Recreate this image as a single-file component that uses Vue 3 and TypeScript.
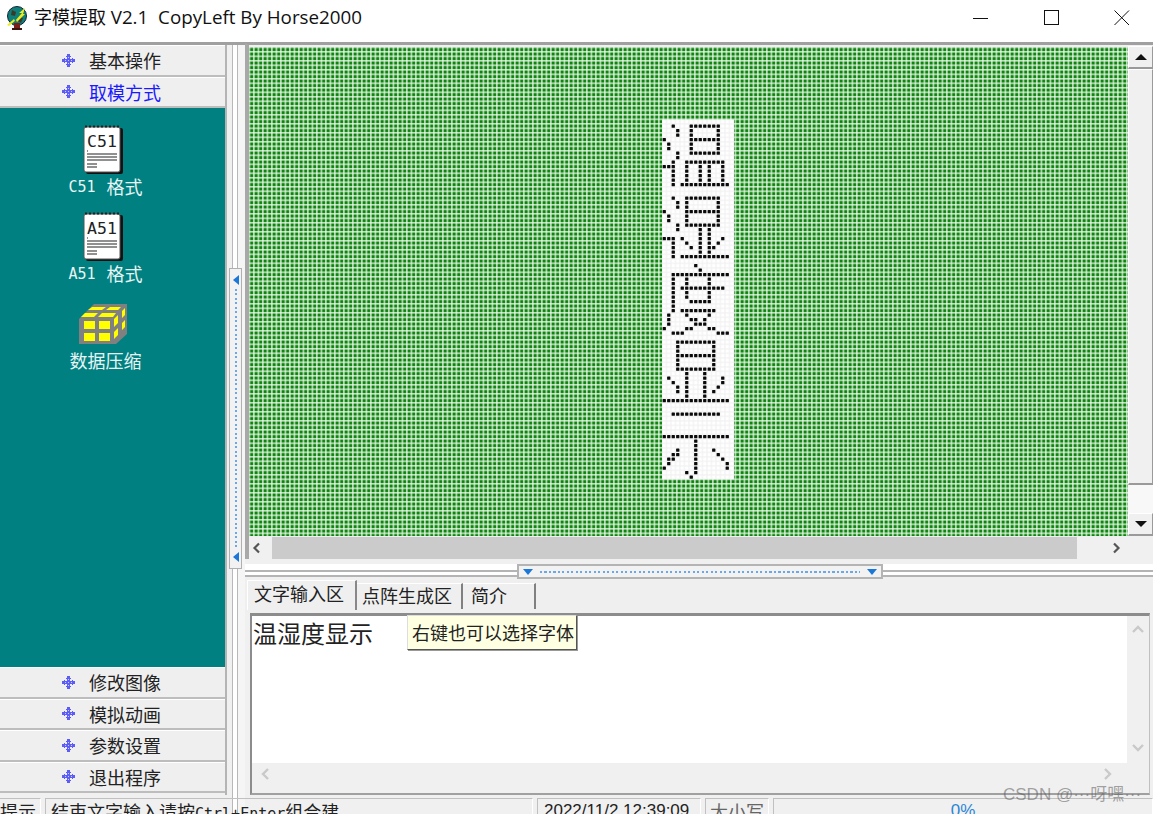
<script setup lang="ts">
import { computed } from 'vue'

const topMenus = ['基本操作', '取模方式']
const bottomMenus = ['修改图像', '模拟动画', '参数设置', '退出程序']

// column lists per row: [start,end] ranges or single columns
type Spec = Record<number, Array<number | [number, number]>>
const spec: Spec = {
  1: [2, [6, 12]], 2: [3, 6, 12], 3: [3, 6, 12], 4: [0, [6, 12]], 5: [1, 6, 12], 6: [1, 6, 12],
  7: [3, [6, 12]], 8: [3], 9: [2, [5, 13]], 10: [[0, 2], 5, 8, 10, 13], 11: [2, 5, 8, 10, 13],
  12: [2, 5, 8, 10, 13], 13: [2, 5, 8, 10, 13], 14: [2, [4, 14]],
  17: [2, [5, 12]], 18: [3, 5, 12], 19: [3, 5, 12], 20: [0, [5, 12]], 21: [1, 5, 12], 22: [1, 5, 12],
  23: [3, [5, 12]], 24: [3, 8, 10], 25: [8, 10], 26: [[0, 2], 4, 8, 10, 13], 27: [2, 5, 8, 10, 12],
  28: [2, 6, 8, 10, 11], 29: [2, 8, 10], 30: [2, [4, 14]],
  32: [7], 33: [8], 34: [[2, 14]], 35: [2, 5, 10], 36: [2, 5, 10], 37: [2, [4, 13]], 38: [2, 5, 10],
  39: [2, 5, 10], 40: [2, [6, 10]], 41: [2], 42: [2, [4, 11]], 43: [1, 5, 10], 44: [1, 6, 7, 9],
  45: [1, [7, 9]], 46: [0, 5, 6, 10, 11], 47: [2, 3, 4, [12, 14]],
  49: [[3, 11]], 50: [3, 11], 51: [3, 11], 52: [[3, 11]], 53: [3, 11], 54: [3, 11], 55: [[3, 11]],
  56: [5, 9], 57: [1, 5, 9, 13], 58: [2, 5, 9, 13], 59: [3, 5, 9, 12], 60: [3, 5, 9, 11], 61: [5, 9],
  62: [[0, 14]],
  65: [[2, 12]], 70: [[0, 14]], 71: [7], 72: [7], 73: [3, 7, 11], 74: [2, 3, 7, 12], 75: [1, 2, 7, 13],
  76: [1, 7, 14], 77: [0, 7, 14], 78: [5, 7], 79: [6]
}

const PITCH = 4.5
const dots = computed(() => {
  const out: { x: number; y: number; k: string }[] = []
  for (const [row, cols] of Object.entries(spec)) {
    for (const c of cols) {
      const [a, b] = Array.isArray(c) ? c : [c, c]
      for (let i = a; i <= b; i++) {
        out.push({ x: 413 + i * PITCH + 0.6, y: 72.4 + Number(row) * PITCH + 0.6, k: `${row}-${i}` })
      }
    }
  }
  return out
})

const tools = [
  { lat: 'C51', cjk: '格式', note: true },
  { lat: 'A51', cjk: '格式', note: true },
  { lat: '', cjk: '数据压缩', note: false }
]
const tabs = ['文字输入区', '点阵生成区', '简介']
</script>

<template>
  <div class="win">
    <header class="title">
      <svg class="appicon" width="26" height="26" viewBox="0 0 26 26">
        <ellipse cx="12" cy="11" rx="9.5" ry="9.5" fill="#0f7f7a" stroke="#123" stroke-width="1" />
        <path d="M7 5l4 2-1 4-4-1zM14 12l4 1-2 5-3-2z" fill="#3a3a2a" />
        <rect x="9" y="18" width="6" height="6" fill="#7a2018" />
        <rect x="7" y="23" width="10" height="2" fill="#3c1410" />
        <path d="M2 20l7-6 1 2 7-8-3 0 6-5-2 6 2 0-8 8-1-2-7 6z" fill="#ecec20" />
      </svg>
      <span class="title-text">字模提取 <span class="title-lat">V2.1&nbsp;&nbsp;CopyLeft By Horse2000</span></span>
      <div class="controls">
        <svg width="16" height="16" viewBox="0 0 16 16" class="c-min"><path d="M0 8.5h15" stroke="#111" fill="none" /></svg>
        <svg width="16" height="16" viewBox="0 0 16 16" class="c-max"><rect x="0.5" y="0.5" width="14" height="14" stroke="#111" fill="none" /></svg>
        <svg width="16" height="16" viewBox="0 0 16 16" class="c-close"><path d="M0.5 0.5l14.5 14.5M15 0.5L0.5 15" stroke="#111" fill="none" /></svg>
      </div>
    </header>

    <main class="body">
      <aside class="side">
        <button v-for="(m, i) in topMenus" :key="m" class="menu" :class="{ on: i === 1 }">
          <svg class="diamond" width="13" height="13" viewBox="0 0 13 13">
            <path d="M5 0h3v2h1v1H8v2h2V4h1v1h2v3h-2v1h-1V8H8v2h1v1H8v2H5v-2H4v-1h1V8H3v1H2V8H0V5h2V4h1v1h2V3H4V2h1z" fill="#5c5cf6" />
            <path d="M6 3h1v1H6zM6 9h1v1H6zM3 6h1v1H3zM9 6h1v1H9zM6 6h1v1H6z" fill="#c9c9ff" />
          </svg>
          <span class="menu-text">{{ m }}</span>
        </button>
        <div class="tools">
          <div v-for="t in tools" :key="t.lat + t.cjk" class="tool">
            <svg v-if="t.note" width="42" height="50" viewBox="0 0 42 50">
              <rect x="3" y="3" width="37" height="46" rx="2" fill="#111" />
              <rect x="1" y="2" width="36" height="45" rx="2" fill="#fff" stroke="#555" />
              <path d="M2 1.5h34" stroke="#222" stroke-width="2" stroke-dasharray="2 2" />
              <text x="19" y="22" text-anchor="middle" class="note-t">{{ t.lat }}</text>
              <path d="M4 26h1M4 29h30M4 32h30M4 35h30M4 39h10M4 42h10" stroke="#222" stroke-width="1.2" />
            </svg>
            <svg v-else width="50" height="42" viewBox="0 0 50 42">
              <path d="M0 16L15 1h33v30L37 41H0z" fill="#808080" />
              <path d="M13 4h14l-4 3H9zM31 4h11l-3 3H27zM6 10h13l-4 4H2zM23 10h14l-3 4H19z" fill="#ffff00" />
              <rect x="5" y="18" width="11" height="8" fill="#ffff00" />
              <rect x="20" y="18" width="11" height="8" fill="#ffff00" />
              <rect x="5" y="30" width="11" height="8" fill="#ffff00" />
              <rect x="20" y="30" width="11" height="8" fill="#ffff00" />
              <path d="M35 16l4-4v8l-4 4zM43 8l3-3v7l-3 3zM35 29l4-4v7l-4 4zM43 20l3-3v7l-3 3z" fill="#ffff00" />
            </svg>
            <div class="tool-label"><span v-if="t.lat" class="lat">{{ t.lat }}</span><span>{{ t.cjk }}</span></div>
          </div>
        </div>
        <button v-for="m in bottomMenus" :key="m" class="menu">
          <svg class="diamond" width="13" height="13" viewBox="0 0 13 13">
            <path d="M5 0h3v2h1v1H8v2h2V4h1v1h2v3h-2v1h-1V8H8v2h1v1H8v2H5v-2H4v-1h1V8H3v1H2V8H0V5h2V4h1v1h2V3H4V2h1z" fill="#5c5cf6" />
            <path d="M6 3h1v1H6zM6 9h1v1H6zM3 6h1v1H3zM9 6h1v1H9zM6 6h1v1H6z" fill="#c9c9ff" />
          </svg>
          <span class="menu-text">{{ m }}</span>
        </button>
      </aside>

      <div class="vsplit">
        <div class="vhandle">
          <i class="tri-l"></i><span class="vdots"></span><i class="tri-l"></i>
        </div>
      </div>

      <section class="right">
        <div class="canvas-box">
          <div class="canvas-row">
            <svg class="grid" width="879" height="489" viewBox="0 0 879 489">
              <defs>
                <pattern id="g" x="0.5" y="0.4" width="4.5" height="4.5" patternUnits="userSpaceOnUse">
                  <rect width="4.5" height="4.5" fill="#eef7ee" />
                  <rect x="0.5" y="0.5" width="3.3" height="3.3" fill="#1a8f1a" />
                  <rect x="1.1" y="1.1" width="2" height="2" fill="#088208" />
                </pattern>
                <pattern id="w" x="413" y="72.4" width="4.5" height="4.5" patternUnits="userSpaceOnUse">
                  <rect width="4.5" height="4.5" fill="#f2f2f2" />
                  <rect x="0.6" y="0.6" width="3.3" height="3.3" fill="#fff" />
                </pattern>
              </defs>
              <rect width="879" height="489" fill="url(#g)" />
              <rect x="413" y="72.4" width="72" height="360" fill="url(#w)" />
              <rect v-for="d in dots" :key="d.k" :x="d.x" :y="d.y" width="3.3" height="3.3" rx="0.5" fill="#0a0a0a" />
            </svg>
            <div class="vbar">
              <div class="arrow-btn"><i class="tri-up"></i></div>
              <div class="vthumb"></div>
              <div class="vtrack"></div>
              <div class="arrow-btn"><i class="tri-down"></i></div>
            </div>
          </div>
          <div class="hbar">
            <svg class="chev" width="12" height="12" viewBox="0 0 12 12"><path d="M8 1.5L3.5 6 8 10.5" fill="none" stroke="#555" stroke-width="2.2" /></svg>
            <div class="hthumb"></div>
            <svg class="chev r" width="12" height="12" viewBox="0 0 12 12"><path d="M4 1.5L8.5 6 4 10.5" fill="none" stroke="#555" stroke-width="2.2" /></svg>
          </div>
        </div>

        <div class="hsplit">
          <div class="hhandle">
            <i class="tri-d"></i><span class="hdots"></span><i class="tri-d"></i>
          </div>
        </div>

        <div class="tabs">
          <div v-for="(t, i) in tabs" :key="t" class="tab" :class="'t' + i">{{ t }}</div>
        </div>

        <div class="editor">
          <div class="edit-row">
            <div class="edit-area">
              <span class="edit-text">温湿度显示</span>
              <div class="tip">右键也可以选择字体</div>
            </div>
            <div class="ebar">
              <svg width="14" height="10" viewBox="0 0 14 10"><path d="M2 8l5-5 5 5" fill="none" stroke="#c9c9c9" stroke-width="2.4" /></svg>
              <svg width="14" height="10" viewBox="0 0 14 10"><path d="M2 2l5 5 5-5" fill="none" stroke="#c9c9c9" stroke-width="2.4" /></svg>
            </div>
          </div>
          <div class="ehbar">
            <svg width="10" height="14" viewBox="0 0 10 14"><path d="M8 2L3 7l5 5" fill="none" stroke="#c9c9c9" stroke-width="2.4" /></svg>
            <svg width="10" height="14" viewBox="0 0 10 14"><path d="M2 2l5 5-5 5" fill="none" stroke="#c9c9c9" stroke-width="2.4" /></svg>
          </div>
        </div>
      </section>
    </main>

    <footer class="status">
      <div class="cell s0">提示</div>
      <div class="cell s1">结束文字输入请按<span class="mono">Ctrl+Enter</span>组合建</div>
      <div class="cell s2">2022/11/2 12:39:09</div>
      <div class="cell s3">大小写</div>
      <div class="cell s4"><span class="pct">0%</span></div>
    </footer>
    <div class="mark">CSDN @···呀嘿···</div>
  </div>
</template>

<style>
html, body { margin: 0; background: #f0f0f0; }
</style>

<style scoped>
.win {
  position: relative;
  width: 1153px;
  height: 814px;
  overflow: hidden;
  display: flex;
  flex-direction: column;
  background: #f0f0f0;
  font-family: "Noto Sans CJK SC", "Noto Sans", sans-serif;
  color: #111;
}
.title {
  height: 42px;
  flex: none;
  background: #fff;
  display: flex;
  align-items: center;
  padding-left: 5px;
  box-sizing: border-box;
}
.appicon { flex: none; margin-top: -6px; }
.title-text {
  margin-left: 3px;
  margin-top: -8px;
  font-family: "Open Sans", "Noto Sans CJK SC", sans-serif;
  font-size: 18px;
  line-height: 24px;
  white-space: pre;
  color: #111;
}
.title-lat { font-size: 18.8px; }
.controls { margin-left: auto; display: flex; align-items: center; margin-top: -7px; }
.c-min { margin-right: 55px; }
.c-max { margin-right: 54px; }
.c-close { margin-right: 23px; }

.body { flex: 1; display: flex; min-height: 0; height: 754px; border-top: 3px solid #a0a0a0; }
.side { width: 225px; flex: none; display: flex; flex-direction: column; border-right: 2px solid #b4b4b4; box-sizing: content-box; height: 750px; background: #f0f0f0; }
.menu {
  height: 31.5px;
  flex: none;
  border: 0;
  border-bottom: 2px solid #bdbdbd;
  border-top: 1px solid #fff;
  background: #efefef;
  padding: 0 0 0 62px;
  display: flex;
  align-items: center;
  font: inherit;
  box-sizing: border-box;
}
.diamond { flex: none; }
.menu-text { margin-left: 14px; font-size: 18px; line-height: 24px; color: #222; }
.menu.on .menu-text { color: #1a1aff; }
.tools {
  flex: none;
  height: 559px;
  background: #008080;
  display: flex;
  flex-direction: column;
  align-items: center;
  padding: 17px 14px 0 0;
  box-sizing: border-box;
  gap: 0;
}
.tool { height: 87px; display: flex; flex-direction: column; align-items: center; justify-content: flex-start; }
.tool svg { height: 50px; display: block; margin-right: 4px; }
.tool-label { color: #e8f4f4; font-size: 18px; line-height: 24px; margin-top: -1px; display: flex; gap: 11px; }
.lat { font-family: "DejaVu Sans Mono", monospace; font-size: 15px; padding-top: 1px; }
.note-t { font-family: "DejaVu Sans Mono", monospace; font-size: 16.5px; fill: #222; }

.vsplit { width: 18px; flex: none; position: relative; background: linear-gradient(90deg, #f0f0f0 0 5px, #b8b8b8 5px 6px, #fff 6px 10px, #b8b8b8 10px 11px, #f5f5f5 11px 17px); }
.vhandle {
  position: absolute;
  left: 2px;
  top: 223px;
  width: 13px;
  height: 301px;
  background: #f2f2f2;
  border: 1px solid #b0b0b0;
  box-sizing: border-box;
  display: flex;
  flex-direction: column;
  align-items: center;
  padding: 6px 0;
  gap: 4px;
}
.vdots { flex: 1; width: 2px; background: repeating-linear-gradient(180deg, #6aa8e8 0 2px, transparent 2px 4.5px); }
.tri-l { width: 0; height: 0; border-top: 5px solid transparent; border-bottom: 5px solid transparent; border-right: 6px solid #1c78d8; }

.right { flex: 1; min-width: 0; display: flex; flex-direction: column; }
.canvas-box { border-top: 2px solid #a0a0a0; border-left: 4px solid #a8a8a8; height: 516px; flex: none; margin-top: -2px; box-sizing: border-box; display: flex; flex-direction: column; }
.canvas-row { display: flex; height: 492px; flex: none; padding-top: 2px; box-sizing: border-box; background: #f0f0f0; }
.grid { display: block; flex: none; }
.vbar { flex: 1; display: flex; flex-direction: column; background: #f0f0f0; margin-top: -1px; }
.arrow-btn { height: 23px; flex: none; display: flex; align-items: center; justify-content: center; background: #f0f0f0; border: 1px solid #fff; border-right-color: #9a9a9a; border-bottom: 2px solid #9a9a9a; box-sizing: border-box; }
.vthumb { height: 416px; flex: none; background: #f0f0f0; border: 1px solid #fff; border-right-color: #9a9a9a; border-bottom: 2px solid #9a9a9a; box-sizing: border-box; }
.vtrack { height: 28px; flex: none; background: #f8f8f8; }
.tri-up { width: 0; height: 0; border-left: 6px solid transparent; border-right: 6px solid transparent; border-bottom: 6px solid #111; }
.tri-down { width: 0; height: 0; border-left: 6px solid transparent; border-right: 6px solid transparent; border-top: 6px solid #111; }
.hbar { height: 22px; flex: none; display: flex; align-items: center; background: #f0f0f0; position: relative; }
.chev { flex: none; margin-left: 2px; }
.hthumb { width: 805px; height: 22px; margin-left: 9px; background: #cbcbcb; flex: none; }
.chev.r { margin-left: 33px; }

.hsplit { height: 20px; flex: none; position: relative; background: linear-gradient(180deg, #f0f0f0 0 5px, #fff 5px 11px, #b4b4b4 11px 13px, #fff 13px 16px, #b4b4b4 16px 18px, #f0f0f0 18px); }
.hhandle {
  position: absolute;
  left: 272px;
  top: 5px;
  width: 366px;
  height: 15px;
  background: #f2f2f2;
  border: 2px solid #b4b4b4;
  box-sizing: border-box;
  display: flex;
  align-items: center;
  padding: 0 4px;
  gap: 7px;
}
.hdots { flex: 1; height: 2px; background: repeating-linear-gradient(90deg, #6aa8e8 0 2px, transparent 2px 4.5px); }
.tri-d { width: 0; height: 0; border-left: 5px solid transparent; border-right: 5px solid transparent; border-top: 6px solid #1c78d8; flex: none; }

.tabs { display: flex; height: 33px; flex: none; padding-left: 2px; font-size: 18px; background: #efefef; align-items: flex-start; margin-top: 1px; }
.tab { height: 26px; margin-top: 3px; line-height: 22px; box-sizing: border-box; border-right: 2px solid #808080; color: #222; padding-left: 8px; flex: none; border-top: 1px solid #fff; }
.t0 { width: 110px; margin-top: 0; height: 30px; line-height: 25px; padding-left: 6px; border-left: 1px solid #fff; border-right: 2px solid #888; }
.t1 { width: 106px; margin-left: 0; padding-left: 5px; }
.t2 { width: 73px; padding-left: 8px; }

.editor { margin-left: 5px; margin-right: 3px; border-top: 3px solid #8c8c8c; border-left: 2px solid #8c8c8c; border-right: 1px solid #c0c0c0; border-bottom: 2px solid #a0a0a0; height: 182px; box-sizing: border-box; flex: none; display: flex; flex-direction: column; background: #f0f0f0; }
.edit-row { flex: 1; min-height: 0; display: flex; }
.edit-area { flex: 1; position: relative; background: #fff; padding-left: 1px; padding-top: 1px; }
.edit-text { font-size: 24px; line-height: 32px; color: #222; }
.tip {
  position: absolute;
  left: 155px;
  top: -1px;
  width: 170px;
  height: 35px;
  box-sizing: border-box;
  background: #ffffe1;
  border: 1px solid #555;
  border-top-color: #ddd;
  border-left-color: #ddd;
  box-shadow: 1px 1px 0 #999;
  font-size: 18px;
  line-height: 33px;
  padding-left: 4px;
  color: #222;
  white-space: nowrap;
}
.ebar { width: 22px; flex: none; background: #f0f0f0; display: flex; flex-direction: column; justify-content: space-between; align-items: center; padding: 8px 0 10px; box-sizing: border-box; }
.ehbar { height: 22px; flex: none; background: #f0f0f0; display: flex; justify-content: space-between; align-items: center; padding: 0 36px 0 8px; margin-bottom: 8px; }

.status { position: absolute; left: 0; top: 798px; width: 1153px; height: 16px; display: flex; gap: 4px; font-size: 18px; line-height: 24px; overflow: hidden; }
.cell { height: 30px; box-sizing: border-box; border: 1px solid #c0c0c0; border-right-color: #fff; border-bottom: 0; white-space: nowrap; flex: none; color: #222; }
.s0 { width: 41px; border-left: 0; padding-left: 0; }
.s1 { width: 488px; padding-left: 5px; }
.mono { font-family: "DejaVu Sans Mono", monospace; font-size: 15px; }
.s2 { width: 164px; margin-left: 0; padding-left: 6px; font-family: "Liberation Sans", sans-serif; font-size: 17px; }
.s3 { width: 64px; padding-left: 4px; color: #666; }
.s4 { flex: 1; text-align: center; font-family: "Liberation Sans", sans-serif; font-size: 17px; }
.pct { color: #2a86d8; }
.mark { position: absolute; left: 1003px; top: 784px; font-family: "Liberation Sans", "Noto Sans CJK SC", sans-serif; font-size: 17px; line-height: 22px; color: rgba(90,90,90,0.55); white-space: nowrap; }
</style>
